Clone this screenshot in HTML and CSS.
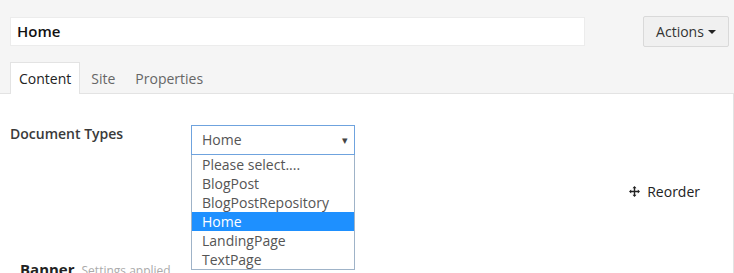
FILE: index.html
```html
<!DOCTYPE html>
<html>
<head>
<meta charset="utf-8">
<link rel="stylesheet" href="styles.css">
</head>
<body>
<div class="editor">
  <div class="header">
    <div class="name-input">Home</div>
    <button class="actions">Actions <span class="caret"></span></button>
  </div>
  <div class="tabs">
    <div class="tab active">Content</div>
    <div class="tab">Site</div>
    <div class="tab">Properties</div>
  </div>
  <div class="panel">
    <div class="prop-row">
      <div class="prop-label">Document Types</div>
      <div class="select-wrap">
        <div class="select">Home<span class="arrow">&#9662;</span></div>
        <ul class="options">
          <li>Please select....</li>
          <li>BlogPost</li>
          <li>BlogPostRepository</li>
          <li class="selected">Home</li>
          <li>LandingPage</li>
          <li>TextPage</li>
        </ul>
      </div>
    </div>
    <div class="reorder-row">
      <span class="reorder">
        <svg width="11" height="11" viewBox="0 0 11 11"><path d="M5.5 0 L7.5 2.2 H3.5 Z M5.5 11 L7.5 8.8 H3.5 Z M0 5.5 L2.2 3.5 V7.5 Z M11 5.5 L8.8 3.5 V7.5 Z" fill="#222"/><path d="M5.5 1.5 V9.5 M1.5 5.5 H9.5" stroke="#222" stroke-width="1.4"/></svg>
        Reorder
      </span>
    </div>
    <div class="banner-row">
      <span class="banner-title">Banner</span>
      <span class="banner-note">Settings applied</span>
    </div>
  </div>
</div>
</body>
</html>
```

FILE: styles.css
```css
html, body {
  margin: 0;
  padding: 0;
  background: #f5f5f5;
  font-family: "Open Sans", "Liberation Sans", sans-serif;
  color: #333;
  overflow: hidden;
}
.editor {
  width: 734px;
  height: 273px;
  display: flex;
  flex-direction: column;
}
.header {
  display: flex;
  align-items: flex-start;
  justify-content: space-between;
  padding: 16px 5px 0 10px;
  height: 46px;
  box-sizing: border-box;
}
.name-input {
  margin-top: 1px;
  width: 567px;
  height: 27px;
  background: #fff;
  border: 1px solid #ececec;
  font-size: 15px;
  font-weight: 600;
  color: #111;
  line-height: 27px;
  padding-left: 6px;
  box-sizing: content-box;
}
.actions {
  width: 86px;
  height: 31px;
  background: #f0f0f0;
  border: 1px solid #d9d9d9;
  border-radius: 2px;
  font-family: inherit;
  font-size: 14px;
  color: #333;
  padding: 0;
  display: flex;
  align-items: center;
  justify-content: center;
  gap: 4px;
}
.caret {
  width: 0;
  height: 0;
  border-left: 4px solid transparent;
  border-right: 4px solid transparent;
  border-top: 4px solid #222;
}
.tabs {
  display: flex;
  padding: 16px 0 0 10px;
  border-bottom: 1px solid #e3e3e3;
  height: 31px;
  box-sizing: content-box;
}
.tab {
  font-size: 14px;
  color: #666;
  padding: 0 8px 0 10px;
  line-height: 31px;
  border: 1px solid transparent;
  border-bottom: none;
}
.tab.active {
  color: #222;
  background: #fff;
  border-color: #e3e3e3;
  margin-bottom: -1px;
  padding: 0 8px;
  line-height: 32px;
}
.panel {
  flex: 1;
  background: #fff;
  border-right: 1px solid #e3e3e3;
  padding: 31px 0 0 10px;
}
.prop-row {
  display: flex;
  align-items: flex-start;
}
.prop-label {
  width: 181px;
  font-size: 14px;
  font-weight: 600;
  color: #3a3a3a;
  line-height: 18px;
}
.select-wrap {
  position: relative;
  width: 164px;
}
.select {
  height: 28px;
  border: 1px solid #6fa3de;
  font-size: 14px;
  color: #555;
  line-height: 28px;
  padding-left: 10px;
  position: relative;
}
.arrow {
  position: absolute;
  right: 6px;
  top: 0;
  font-size: 11px;
  color: #444;
}
.options {
  position: absolute;
  left: 0;
  top: 30px;
  width: 162px;
  margin: 0;
  padding: 0;
  list-style: none;
  background: #fff;
  border: 1px solid #9fb3c8;
  border-top: none;
  z-index: 2;
}
.options li {
  font-size: 14px;
  color: #555;
  height: 19px;
  line-height: 19px;
  padding-left: 10px;
}
.options li.selected {
  background: #1e90ff;
  color: #fff;
}
.reorder-row {
  display: flex;
  justify-content: flex-end;
  padding: 27px 33px 0 0;
}
.reorder {
  font-size: 14px;
  color: #222;
  display: flex;
  align-items: center;
  gap: 7px;
}
.banner-row {
  padding: 58px 0 0 10px;
  display: flex;
  align-items: baseline;
  gap: 7px;
}
.banner-title {
  font-size: 15px;
  font-weight: 700;
  color: #222;
}
.banner-note {
  font-size: 12px;
  color: #aaa;
}
```
